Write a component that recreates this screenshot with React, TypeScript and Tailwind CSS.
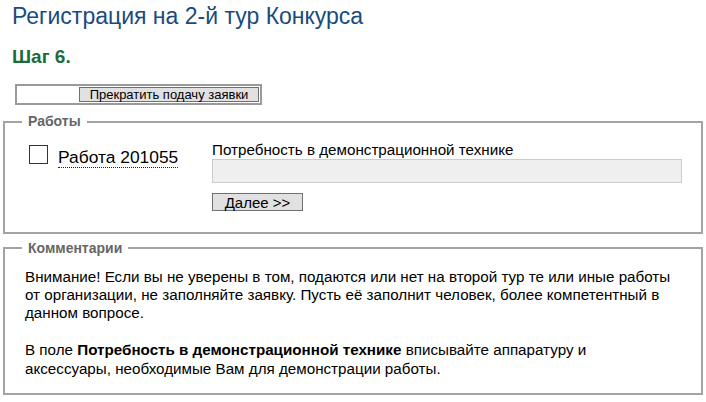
import React from "react";

const App: React.FC = () => {
    return (
        <div className="w-[706px] h-[402px] overflow-hidden bg-white px-[3px] font-['Liberation_Sans',Arial,sans-serif] text-black">
            <h1 className="pl-[9px] pt-[3px] text-[23px] leading-[26px] text-[#1a4b7d]">Регистрация на 2-й тур Конкурса</h1>
            <h2 className="mt-[17px] pl-[9px] text-[19px] font-bold leading-[22px] text-[#1d6a3a]">Шаг 6.</h2>

            <div className="mt-[16px] ml-[12px] flex h-[21px] w-[247px] items-center justify-end border-2 border-[#9a9a9a] pr-[1px]">
                <button className="h-[15px] w-[180px] border border-[#707070] bg-[#e1e1e1] text-[13px] leading-[13px] text-black">
                    Прекратить подачу заявки
                </button>
            </div>

            <fieldset className="mt-[9px] w-[700px] border-2 border-[#a3a3a3] pb-[17px]">
                <legend className="ml-[17px] px-[6px] text-[14px] font-bold leading-[15px] text-[#666666]">Работы</legend>
                <div className="flex pt-[12px]">
                    <div className="flex w-[207px] items-start pl-[24px]">
                        <span className="mt-[4px] block h-[19px] w-[19px] border border-[#333333] bg-white"></span>
                        <span className="ml-[10px] mt-[7px] border-b border-dotted border-[#222222] text-[17.4px] leading-[19px]">Работа 201055</span>
                    </div>
                    <div className="w-[470px]">
                        <div className="text-[15.2px] leading-[18px]">Потребность в демонстрационной технике</div>
                        <div className="h-[24px] w-[470px] border border-[#cccccc] bg-[#efefef]"></div>
                        <button className="mt-[10px] h-[18px] w-[91px] border border-[#707070] bg-[#e1e1e1] text-[15px] leading-[15px] text-black">
                            Далее &gt;&gt;
                        </button>
                    </div>
                </div>
            </fieldset>

            <fieldset className="mt-[7px] w-[700px] border-2 border-[#a3a3a3] pb-[15px]">
                <legend className="ml-[17px] px-[6px] text-[14px] font-bold leading-[15px] text-[#666666]">Комментарии</legend>
                <div className="pl-[20px] pr-[8px] pt-[12px] text-[15.2px] leading-[18.4px]">
                    <p>
                        Внимание! Если вы не уверены в том, подаются или нет на второй тур те или иные работы
                        <br />
                        от организации, не заполняйте заявку. Пусть её заполнит человек, более компетентный в
                        <br />
                        данном вопросе.
                    </p>
                    <p className="mt-[18.4px]">
                        В поле <b>Потребность в демонстрационной технике</b> вписывайте аппаратуру и
                        <br />
                        аксессуары, необходимые Вам для демонстрации работы.
                    </p>
                </div>
            </fieldset>
        </div>
    );
};

export default App;
